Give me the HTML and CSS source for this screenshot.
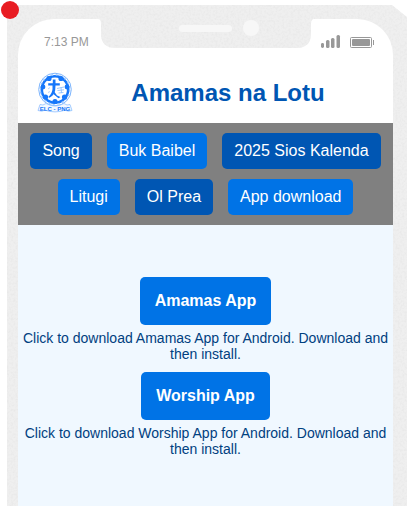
FILE: index.html
```html
<!DOCTYPE html>
<html lang="tpi">
<head>
<meta charset="utf-8">
<meta name="viewport" content="width=device-width, initial-scale=1">
<title>Amamas na Lotu</title>
<link rel="stylesheet" href="styles.css">
</head>
<body>
<div class="phone">
  <svg class="grain" aria-hidden="true">
    <filter id="grain" x="0" y="0" width="100%" height="100%">
      <feTurbulence type="fractalNoise" baseFrequency="0.45" numOctaves="2" seed="4"/>
      <feColorMatrix values="0 0 0 0 0.75  0 0 0 0 0.75  0 0 0 0 0.75  1 0 0 0 -0.4"/>
    </filter>
    <rect width="100%" height="100%" filter="url(#grain)"/>
  </svg>
  <div class="screen">
    <div class="status">
      <span class="time">7:13 PM</span>
      <svg class="indicators" width="54" height="14" viewBox="0 0 54 14" fill="#989898" aria-hidden="true">
        <rect x="1" y="8" width="3" height="5" rx="1.4"/>
        <rect x="6" y="5" width="3.5" height="8" rx="1.5"/>
        <rect x="11" y="3" width="3.5" height="10" rx="1.5"/>
        <rect x="16.5" y="0" width="3.5" height="13" rx="1.5"/>
        <rect x="30.5" y="2.5" width="21" height="10" rx="1" fill="none" stroke="#989898"/>
        <rect x="32" y="4" width="18" height="7" rx="1"/>
        <rect x="53" y="5" width="1" height="5"/>
      </svg>
    </div>
    <header class="header">
      <svg class="logo" width="36" height="42" viewBox="0 0 36 42" role="img" aria-label="ELC - PNG">
        <circle cx="18" cy="17.500" r="16.300" fill="#fff" stroke="#7db5fd" stroke-width="1"/>
        <circle cx="18" cy="17.500" r="13.200" fill="#fff" stroke="#1677fa" stroke-width="2.600"/>
        <circle cx="18" cy="17.500" r="14.600" fill="none" stroke="#8fc0ff" stroke-width="1.400" stroke-dasharray="2 2.600"/>
        <g fill="#1677fa">
          <circle cx="12" cy="6.500" r="2.600"/>
          <circle cx="24" cy="6.500" r="2.600"/>
          <circle cx="30" cy="15" r="2.400"/>
          <circle cx="6" cy="15" r="2.400"/>
          <circle cx="27.500" cy="25" r="2.600"/>
          <circle cx="8.500" cy="25" r="2.600"/>
          <circle cx="18" cy="29.500" r="2.600"/>
          <path d="M15.800 7.500h2.700v3.700h4.300v2.300h-4.300l-.3 4.700q-.9 5-5.700 7.500l-1.300-.7q4-3.400 4.300-8v-3.500h-4.300v-2.300h4.600z"/>
          <path d="M17.200 19.500l2.800 4 3.500 1.500-2 1.300-4.600-3.800z"/>
        </g>
        <path d="M20 16.500l7-1.500M20.500 18.500l6.500-.7M21.500 21l5-.5M24 15.500l.5 5.500" fill="none" stroke="#8fc0ff" stroke-width=".9"/>
        <path d="M11 17l2-1.500M11 20.500l2-1" fill="none" stroke="#b4d4ff"/>
        <path d="M3 32.500q3 1.500 6-1 9 5 18 0 3 2.500 6 1l2 6q-4 1.500-7-.3-10 3.400-20 0-3 1.800-7 .3z" fill="#f4f9ff" stroke="#8fc0ff" stroke-width=".8"/>
        <text class="logo-text" x="18" y="38.500" text-anchor="middle">ELC - PNG</text>
      </svg>
      <h1 class="title">Amamas na Lotu</h1>
    </header>
    <nav class="nav">
      <a class="tab tab-dark" href="#song">Song</a>
      <a class="tab" href="#baibel">Buk Baibel</a>
      <a class="tab tab-dark" href="#kalenda">2025 Sios Kalenda</a>
      <a class="tab" href="#litugi">Litugi</a>
      <a class="tab tab-dark" href="#prea">Ol Prea</a>
      <a class="tab" href="#download">App download</a>
    </nav>
    <main class="content">
      <section class="app">
        <button class="download" type="button">Amamas App</button>
        <p class="note">Click to download Amamas App for Android. Download and then install.</p>
      </section>
      <section class="app">
        <button class="download" type="button">Worship App</button>
        <p class="note">Click to download Worship App for Android. Download and then install.</p>
      </section>
    </main>
  </div>
  <svg class="notch" width="216" height="44" viewBox="0 0 216 44" aria-hidden="true">
    <path id="notch-shape" d="M0 14Q3 14 3 19V29Q3 43 18 43H198Q213 43 213 29V19Q213 14 216 14V0H0Z" fill="#efefef"/>
    <clipPath id="notch-clip"><use href="#notch-shape"/></clipPath>
    <g clip-path="url(#notch-clip)"><rect width="216" height="44" filter="url(#grain)"/></g>
    <rect x="81" y="20" width="53" height="7" rx="3.500" fill="#f7f7f7"/>
    <circle cx="153" cy="23" r="8" fill="#f7f7f7"/>
  </svg>
</div>
<span class="marker"></span>
</body>
</html>
```
FILE: styles.css
```css
* {
  box-sizing: border-box;
}

body {
  margin: 0;
  background: #fff;
  font-family: "Liberation Sans", Arial, sans-serif;
}

.phone {
  position: relative;
  display: flex;
  min-height: calc(100vh - 5px);
  margin: 5px 0 0 7px;
  padding: 14px 14px 0 11px;
  background: #efefef;
  clip-path: polygon(0 0, calc(100% - 15px) 0, 100% 12px, 100% 100%, 0 100%);
}

.grain {
  position: absolute;
  inset: 0;
  width: 100%;
  height: 100%;
}

.screen {
  position: relative;
  display: flex;
  flex: 1;
  flex-direction: column;
  overflow: hidden;
  border-radius: 36px 36px 0 0;
  background: #fff;
}

.status {
  display: flex;
  align-items: center;
  justify-content: space-between;
  height: 44px;
  padding: 2px 19px 0 26px;
}

.time {
  color: #989898;
  font-size: 12px;
}

.notch {
  position: absolute;
  top: 0;
  left: calc(50% - 109px);
}

.header {
  display: flex;
  align-items: center;
  gap: 10px;
  height: 60px;
  padding: 0 20px 0 19px;
}

.logo {
  flex: none;
}

.logo-text {
  fill: #1677fa;
  font-size: 6px;
  font-weight: bold;
}

.title {
  flex: 1;
  margin: 0;
  color: #0056b3;
  font-size: 24px;
  line-height: 28px;
  text-align: center;
}

.nav {
  display: flex;
  flex-wrap: wrap;
  justify-content: center;
  gap: 10px 15px;
  padding: 10px 12px;
  background: #808080;
}

.tab {
  padding: 9px 12px;
  border-radius: 5px;
  background: #0073e6;
  color: #fff;
  font-size: 16px;
  line-height: 18px;
  text-decoration: none;
}

.tab-dark {
  background: #0056b3;
}

.content {
  display: flex;
  flex: 1;
  flex-direction: column;
  gap: 10px;
  padding: 52px 5px 20px;
  background: #f0f8ff;
  text-align: center;
}

.download {
  padding: 15px;
  border: 0;
  border-radius: 5px;
  background: #0073e6;
  color: #fff;
  font: bold 16px/18px "Liberation Sans", Arial, sans-serif;
}

.note {
  margin: 5px 0 0;
  color: #004080;
  font-size: 14px;
  line-height: 16px;
}

.marker {
  position: absolute;
  top: 1px;
  left: 1px;
  width: 18px;
  height: 18px;
  border-radius: 50%;
  background: #e81c22;
}
```
